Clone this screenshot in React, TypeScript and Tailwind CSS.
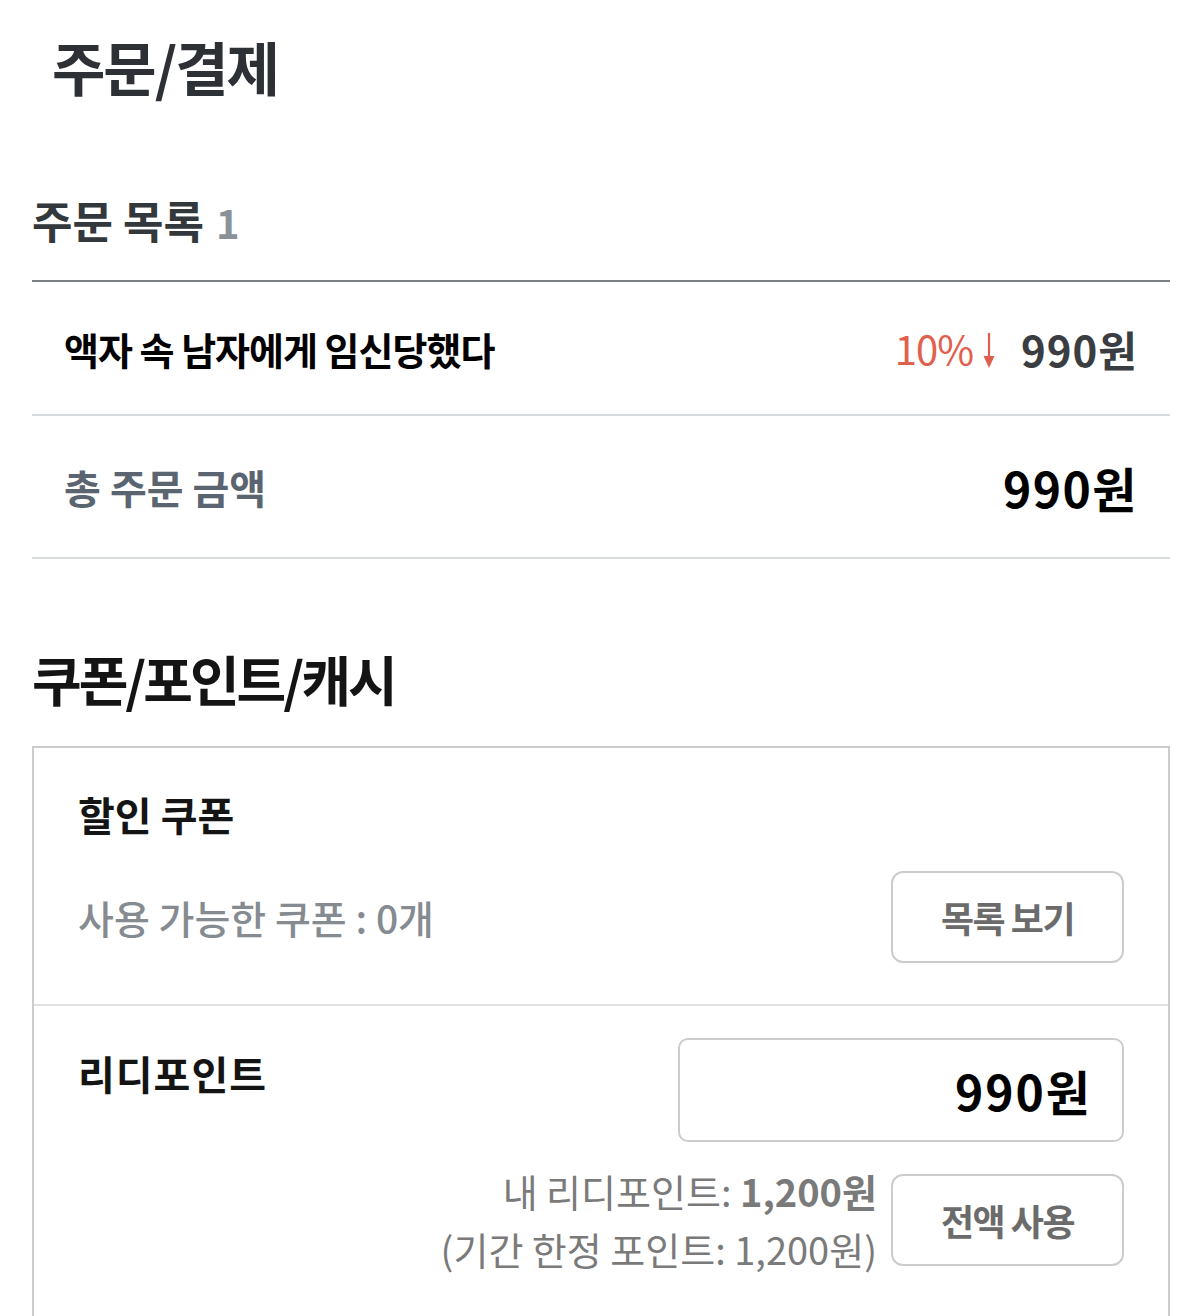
import React from 'react';

const font = { fontFamily: '"Noto Sans CJK KR", "Noto Sans", sans-serif' };

export default function App() {
    return (
        <div className="bg-white w-[1200px] h-[1316px] overflow-hidden" style={font}>
            <div className="pl-8 pr-[30px]">
                {/* page title */}
                <h1 className="pl-5 pt-[26px] text-[58px] leading-[80px] font-bold tracking-[-2px] text-[#2d3135]">주문/결제</h1>

                {/* order list */}
                <div className="mt-[86px] flex items-baseline gap-3 pb-[30px] border-b-2 border-[#7b8085]">
                    <span className="text-[44px] leading-[56px] font-bold tracking-[0px] text-[#33383c]">주문 목록</span>
                    <span className="text-[40px] leading-[56px] font-bold text-[#8a9198]">1</span>
                </div>

                <div className="flex items-center justify-between px-8 h-[134px] border-b-2 border-[#d8dbde]">
                    <span className="text-[38px] font-bold tracking-[-1px] text-black">액자 속 남자에게 임신당했다</span>
                    <div className="flex items-center">
                        <span className="text-[40px] font-normal tracking-[-1px] text-[#e0604d]">10%</span>
                        <svg width="16" height="40" viewBox="0 0 16 40" className="ml-[8px] mt-[4px]">
                            <line x1="8" y1="3" x2="8" y2="28" stroke="#e0604d" strokeWidth="2.2" />
                            <path d="M2.5 26 L13.5 26 L8 38 Z" fill="#e0604d" />
                        </svg>
                        <span className="ml-[24px] text-[42px] font-bold tracking-[1px] text-[#3a3e42]">990원</span>
                    </div>
                </div>

                <div className="flex items-center justify-between px-8 h-[143px] border-b-2 border-[#d8dbde]">
                    <span className="text-[40px] font-bold tracking-[0px] text-[#5b6571]">총 주문 금액</span>
                    <span className="text-[48px] font-bold tracking-[1.5px] text-black">990원</span>
                </div>

                {/* coupon / point / cash */}
                <h2 className="mt-[84px] text-[54px] leading-[72px] font-bold tracking-[-3px] text-[#141414]">쿠폰/포인트/캐시</h2>

                <div className="mt-[31px] border-2 border-[#cccccc] border-b-0">
                    <div className="px-[44px] pt-[38px] pb-[41px] border-b-2 border-[#e2e2e2]">
                        <div className="text-[40px] leading-[56px] font-bold tracking-[0px] text-[#141414]">할인 쿠폰</div>
                        <div className="mt-[29px] flex items-center justify-between">
                            <span className="text-[39px] font-medium tracking-[0px] text-[#858b91]">사용 가능한 쿠폰 : 0개</span>
                            <button className="w-[233px] h-[92px] rounded-[12px] border-2 border-[#cccccc] text-[36px] font-bold tracking-[-1.5px] text-[#6b6b6b]">목록 보기</button>
                        </div>
                    </div>

                    <div className="px-[44px] pt-[32px] pb-[60px] flex justify-between">
                        <div className="pt-[7px] text-[40px] leading-[56px] font-bold tracking-[1px] text-[#141414]">리디포인트</div>
                        <div className="flex flex-col items-end">
                            <div className="w-[446px] h-[104px] rounded-[10px] border-2 border-[#cccccc] flex items-center justify-end pr-[30px]">
                                <span className="text-[48px] font-bold tracking-[2px] text-black">990원</span>
                            </div>
                            <div className="mt-[20px] flex items-center gap-[14px]">
                                <div className="text-right text-[#7a7a7a] text-[38px] leading-[58px] tracking-[0px]">
                                    <div>내 리디포인트: <span className="font-bold">1,200원</span></div>
                                    <div>(기간 한정 포인트: 1,200원)</div>
                                </div>
                                <button className="w-[233px] h-[92px] rounded-[12px] border-2 border-[#cccccc] text-[36px] font-bold tracking-[-1.5px] text-[#6b6b6b]">전액 사용</button>
                            </div>
                        </div>
                    </div>
                </div>
            </div>
        </div>
    );
}
